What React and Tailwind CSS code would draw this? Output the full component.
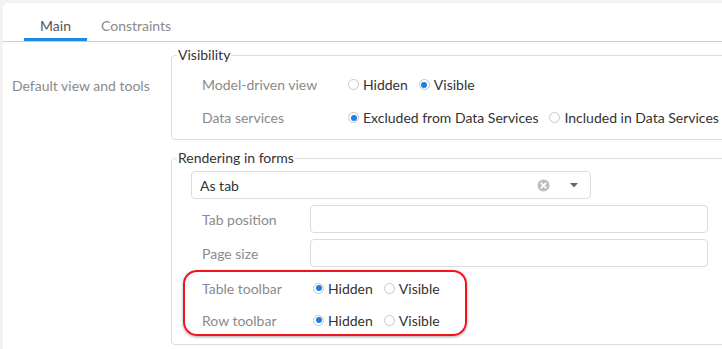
import React from 'react';

const font = { fontFamily: 'Lato, "Open Sans", sans-serif' };

function Radio({ checked, label }) {
  return (
    <span className="flex items-center">
      <span
        className={`w-[11px] h-[11px] rounded-full border flex items-center justify-center mr-[4px] ${
          checked ? 'border-[#c4c4c4] bg-white' : 'border-[#c8c8c8] bg-white'
        }`}
      >
        {checked && <span className="w-[6px] h-[6px] rounded-full bg-[#1a7fe6]" />}
      </span>
      <span className="text-[#333]">{label}</span>
    </span>
  );
}

function RadioRow({ label, labelWidth, options, height }) {
  return (
    <div className="flex items-center" style={{ height }}>
      <div className="text-[#8a8a8a] shrink-0" style={{ width: labelWidth }}>{label}</div>
      <div className="flex items-center gap-[11px]">
        {options.map(o => <Radio key={o.label} {...o} />)}
      </div>
    </div>
  );
}

export default function App() {
  return (
    <div className="w-[722px] h-[349px] bg-[#f2f2f2] pt-[3px] pl-[3px] overflow-hidden text-[14px] relative" style={font}>
      <div className="bg-white rounded-tl-[5px] h-full overflow-hidden">
        {/* Tabs */}
        <div className="h-[39px] flex items-end border-b border-[#cfcfcf] pl-[21px]">
          <div className="w-[63px] h-full flex flex-col items-center justify-end">
            <span className="text-[#555] leading-none mb-[5px]">Main</span>
            <span className="h-[3px] w-full bg-[#1e88e5]" />
          </div>
          <div className="h-full flex items-end ml-[14px]">
            <span className="text-[#8a8a8a] leading-none mb-[8px]">Constraints</span>
          </div>
        </div>

        <div className="flex">
          <div className="w-[168px] shrink-0 pl-[9px] pt-[33px] text-[#8a8a8a]">Default view and tools</div>

          <div className="w-[580px] shrink-0 pt-[4px]">
            <fieldset className="border border-[#dcdcdc] rounded-[4px] pt-[4px] pb-[5px]">
              <legend className="ml-[5px] px-[1px] text-[#333] leading-[18px]">Visibility</legend>
              <div className="pl-[30px]">
                <RadioRow
                  label="Model-driven view"
                  labelWidth={146}
                  height={33}
                  options={[{ label: 'Hidden' }, { label: 'Visible', checked: true }]}
                />
                <RadioRow
                  label="Data services"
                  labelWidth={146}
                  height={33}
                  options={[{ label: 'Excluded from Data Services', checked: true }, { label: 'Included in Data Services' }]}
                />
              </div>
            </fieldset>

            <fieldset className="mt-[9px] border border-[#dcdcdc] rounded-[4px] pb-[8px]">
              <legend className="ml-[5px] px-[1px] text-[#333] leading-[18px]">Rendering in forms</legend>
              <div className="pl-[19px]">
                <div className="mt-[4px] w-[400px] h-[28px] border border-[#dcdcdc] rounded-[4px] flex items-center pl-[8px] pr-[12px] text-[#333]">
                  <span className="flex-1">As tab</span>
                  <svg width="13" height="13" viewBox="0 0 13 13" className="mr-[20px]">
                    <circle cx="6.5" cy="6.5" r="6" fill="#bdbdbd" />
                    <path d="M4.3 4.3 L8.7 8.7 M8.7 4.3 L4.3 8.7" stroke="#fff" strokeWidth="1.8" strokeLinecap="round" />
                  </svg>
                  <svg width="8" height="5" viewBox="0 0 8 5">
                    <path d="M0 0 H8 L4 4.5 Z" fill="#666" />
                  </svg>
                </div>
                <div className="pl-[11px]">
                  <div className="flex items-center mt-[6px]">
                    <div className="w-[108px] text-[#8a8a8a]">Tab position</div>
                    <div className="w-[398px] h-[28px] border border-[#dcdcdc] rounded-[4px]" />
                  </div>
                  <div className="flex items-center mt-[6px]">
                    <div className="w-[108px] text-[#8a8a8a]">Page size</div>
                    <div className="w-[398px] h-[28px] border border-[#dcdcdc] rounded-[4px]" />
                  </div>
                  <div className="mt-[5px]">
                    <RadioRow
                      label="Table toolbar"
                      labelWidth={111}
                      height={32}
                      options={[{ label: 'Hidden', checked: true }, { label: 'Visible' }]}
                    />
                    <RadioRow
                      label="Row toolbar"
                      labelWidth={111}
                      height={32}
                      options={[{ label: 'Hidden', checked: true }, { label: 'Visible' }]}
                    />
                  </div>
                </div>
              </div>
            </fieldset>
          </div>
        </div>
      </div>

      {/* Annotation highlight */}
      <div className="absolute left-[183px] top-[270px] w-[284px] h-[66px] border-2 border-[#f0141e] rounded-[14px] shadow-[0_1px_3px_rgba(0,0,0,0.35)] pointer-events-none" />
    </div>
  );
}
